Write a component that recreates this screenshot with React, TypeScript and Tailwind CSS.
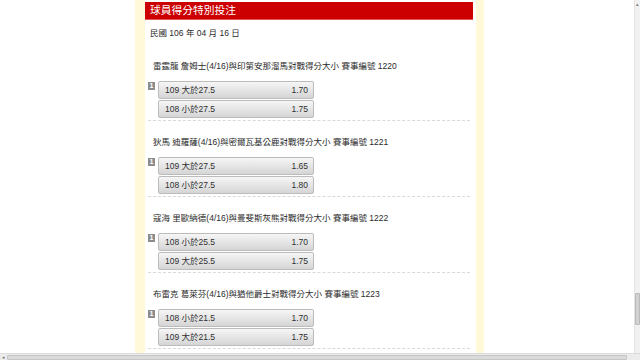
import React from "react";

type Row = [string, string];
type Section = { title: string; rows: Row[] };

const sections: Section[] = [
  {
    title: "雷霆龍 詹姆士(4/16)與印第安那溜馬對戰得分大小 賽事編號 1220",
    rows: [
      ["109 大於27.5", "1.70"],
      ["108 小於27.5", "1.75"],
    ],
  },
  {
    title: "狄馬 迪羅薩(4/16)與密爾瓦基公鹿對戰得分大小 賽事編號 1221",
    rows: [
      ["109 大於27.5", "1.65"],
      ["108 小於27.5", "1.80"],
    ],
  },
  {
    title: "寇海 里歐納德(4/16)與曼斐斯灰熊對戰得分大小 賽事編號 1222",
    rows: [
      ["108 小於25.5", "1.70"],
      ["109 大於25.5", "1.75"],
    ],
  },
  {
    title: "布雷克 葛萊芬(4/16)與猶他爵士對戰得分大小 賽事編號 1223",
    rows: [
      ["108 小於21.5", "1.70"],
      ["109 大於21.5", "1.75"],
    ],
  },
];

const font = {
  fontFamily:
    "'Liberation Sans', Arial, 'Noto Sans CJK TC', 'Noto Sans CJK SC', sans-serif",
};

function BetSection({ s }: { s: Section }) {
  return (
    <div className="ml-[3px] mr-[6px] pt-[15px] pb-[2px] border-b border-dashed border-[#d9d9d9]">
      <div className="pl-[5px] h-[12px] leading-[12px] text-[8.5px] text-[#2a2a2a] whitespace-nowrap">
        {s.title}
      </div>
      <div className="mt-[9px] flex">
        <div className="w-[7px] h-[8px] mt-[1px] bg-[#8c8c8c] text-white text-[7px] leading-[8px] font-bold flex items-center justify-center">
          1
        </div>
        <div className="ml-[3px] flex flex-col gap-[1px]">
          {s.rows.map((r, i) => (
            <div
              key={i}
              className="w-[156px] h-[18px] flex items-center justify-between pl-[6px] pr-[5px] border border-[#bcbcbc] rounded-[2px] bg-linear-to-b from-[#f6f6f6] to-[#d5d5d5] text-[8.5px] text-[#303030]"
            >
              <span>{r[0]}</span>
              <span>{r[1]}</span>
            </div>
          ))}
        </div>
      </div>
    </div>
  );
}

export default function App() {
  return (
    <div
      className="w-[640px] h-[360px] overflow-hidden flex flex-col bg-white"
      style={font}
    >
      <div className="flex flex-1 min-h-0">
        <div className="flex-1 overflow-hidden">
          <div className="ml-[135px] w-[349px] h-full bg-[#fff8d9] pl-[10px] pr-[8px]">
            <div className="bg-white h-full pt-[2px] overflow-hidden">
              <div className="mr-[3px] h-[18px] bg-[#cc0000] border-b border-[#e25a5a] pl-[5px] leading-[17px] text-white text-[10.75px]">
                球員得分特別投注
              </div>
              <div className="mt-[7px] pl-[5px] h-[12px] leading-[12px] text-[8.5px] text-[#2a2a2a]">
                民國 106 年 04 月 16 日
              </div>
              <div className="mt-[6px]">
                {sections.map((s, i) => (
                  <BetSection key={i} s={s} />
                ))}
              </div>
            </div>
          </div>
        </div>
        <div className="w-[6px] bg-[#f1f1f1] border-l border-[#e4e4e4] flex flex-col items-center">
          <div className="h-[8px] text-[5px] leading-[8px] text-[#777]">▴</div>
          <div className="mt-[285px] w-[5px] h-[32px] bg-[#d2d2d2] border border-[#b9b9b9] rounded-[1px]" />
        </div>
      </div>
      <div className="h-[7px] bg-[#ececec] border-t border-[#dcdcdc] flex items-center">
        <div className="w-[7px] text-[5px] leading-[6px] text-[#777] text-center">◂</div>
        <div className="w-[620px] h-[5px] bg-[#dadada] border border-[#c6c6c6] rounded-[1px]" />
        <div className="flex-1" />
      </div>
    </div>
  );
}
